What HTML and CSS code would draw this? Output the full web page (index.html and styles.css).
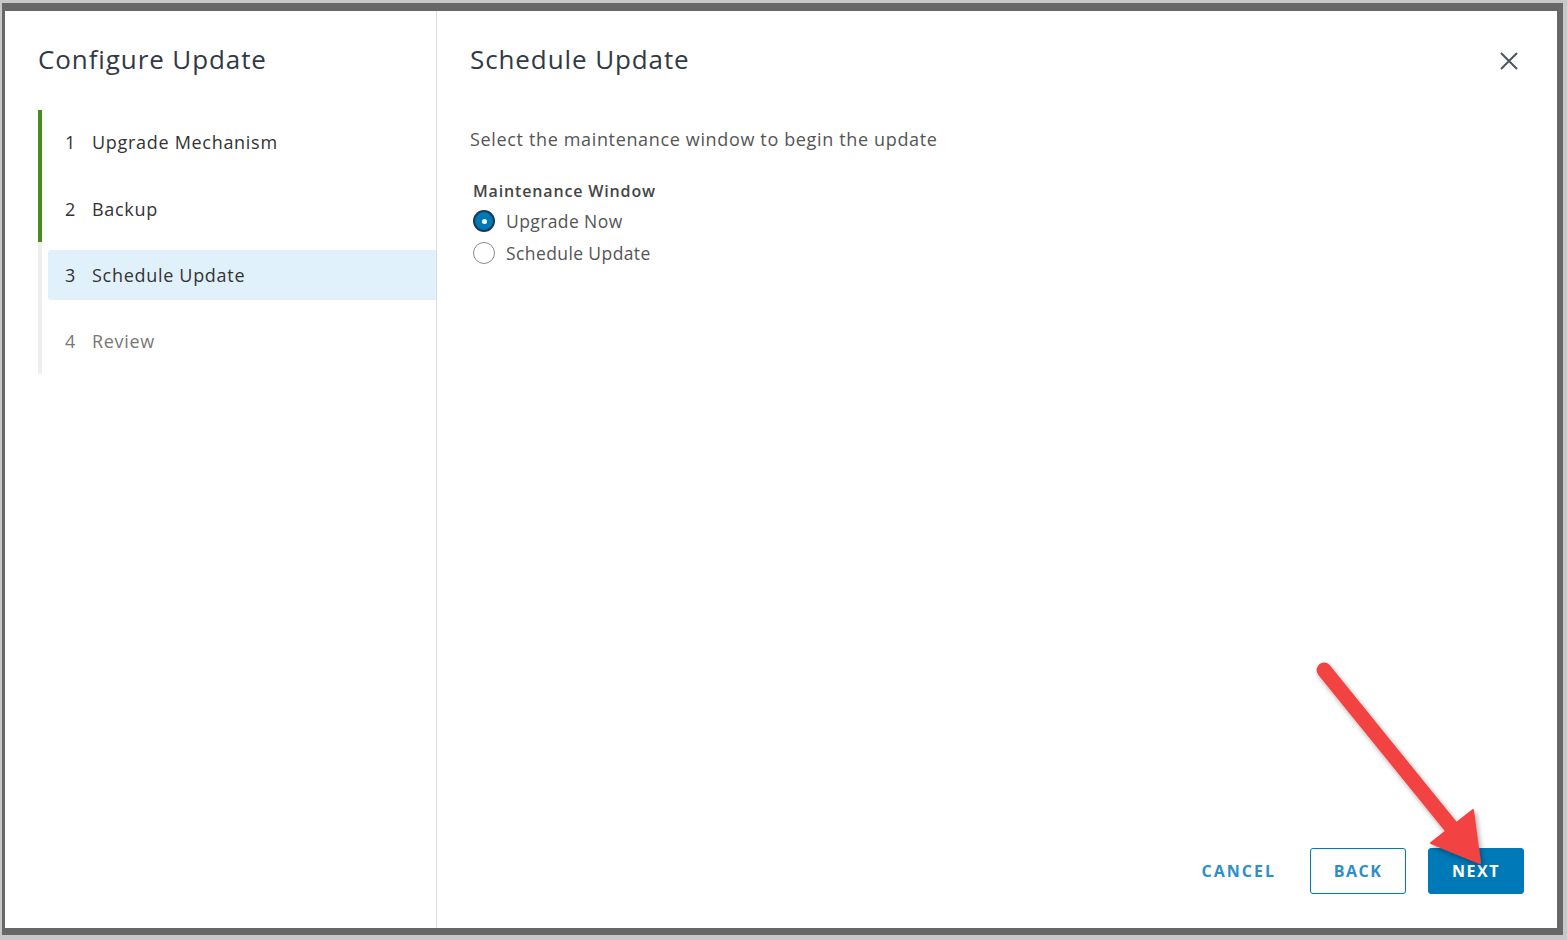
FILE: index.html
```html
<!DOCTYPE html>
<html>
<head>
<meta charset="utf-8">
<link rel="stylesheet" href="styles.css">
</head>
<body>
<div class="screen">
  <div class="dialog">
    <aside class="side">
      <h1 class="side-title">Configure Update</h1>
      <ol class="steps">
        <li class="step done"><div class="step-inner"><span class="num">1</span><span>Upgrade Mechanism</span></div></li>
        <li class="step done"><div class="step-inner"><span class="num">2</span><span>Backup</span></div></li>
        <li class="step current"><div class="step-inner"><span class="num">3</span><span>Schedule Update</span></div></li>
        <li class="step todo"><div class="step-inner"><span class="num">4</span><span>Review</span></div></li>
      </ol>
    </aside>
    <main class="content">
      <header class="content-head">
        <h2 class="content-title">Schedule Update</h2>
        <button class="close" aria-label="Close">
          <svg width="20" height="20" viewBox="0 0 20 20"><path d="M2 2L18 18M18 2L2 18" stroke="#4a5560" stroke-width="2" fill="none"/></svg>
        </button>
      </header>
      <p class="lead">Select the maintenance window to begin the update</p>
      <div class="field">
        <div class="field-label">Maintenance Window</div>
        <label class="radio"><span class="dot checked"></span>Upgrade Now</label>
        <label class="radio"><span class="dot"></span>Schedule Update</label>
      </div>
      <footer class="actions">
        <button class="btn link">CANCEL</button>
        <button class="btn outline">BACK</button>
        <button class="btn primary">NEXT</button>
      </footer>
    </main>
  </div>
</div>
<svg class="arrow" width="1567" height="940" viewBox="0 0 1567 940">
  <defs>
    <filter id="sh" x="-20%" y="-20%" width="140%" height="140%">
      <feDropShadow dx="2" dy="3" stdDeviation="2.5" flood-color="#000" flood-opacity="0.35"/>
    </filter>
  </defs>
  <g filter="url(#sh)" fill="#f24343" stroke="#f24343">
    <line x1="1324" y1="670" x2="1452" y2="828" stroke-width="15" stroke-linecap="round"/>
    <polygon points="1431,843 1473,810 1480,863" stroke-width="2" stroke-linejoin="round"/>
  </g>
</svg>
</body>
</html>
```
FILE: styles.css
```css
* { box-sizing: border-box; }
html, body { margin: 0; padding: 0; }
body {
  width: 1567px;
  height: 940px;
  background: #c8c8c8;
  font-family: "Open Sans", "Noto Sans", sans-serif;
  color: #333;
  overflow: hidden;
  position: relative;
}
.screen {
  margin: 3px 4px 5px 2px;
  height: 932px;
  background: #676767;
  padding: 8px 6px 7px 3px;
}
.dialog {
  height: 917px;
  background: #fff;
  display: flex;
}
.side {
  width: 432px;
  flex: none;
  border-right: 1px solid #dcdcdc;
  padding: 28px 0 0 33px;
}
.side-title, .content-title {
  margin: 0;
  font-weight: 400;
  font-size: 26px;
  letter-spacing: 0.9px;
  line-height: 40px;
  color: #313a44;
}
.steps {
  list-style: none;
  margin: 31px 0 0;
  padding: 0;
}
.step {
  height: 66px;
  display: flex;
  border-left: 4px solid #eeeeee;
}
.step.done { border-left-color: #4a8a1b; }
.step-inner {
  flex: 1;
  margin: 8px 0 8px 6px;
  border-radius: 3px 0 0 3px;
  display: flex;
  align-items: center;
  padding-left: 17px;
  font-size: 18px;
  letter-spacing: 0.7px;
  color: #333;
}
.step:nth-child(1) .step-inner { padding-bottom: 3px; }
.step:nth-child(2) .step-inner { padding-bottom: 1px; }
.step.current .step-inner { background: #e1f1fb; }
.step.todo .step-inner { color: #777; }
.num { width: 27px; flex: none; letter-spacing: 0; }

.content {
  flex: 1;
  display: flex;
  flex-direction: column;
  padding: 28px 33px 34px 33px;
}
.content-head {
  display: flex;
  align-items: center;
  justify-content: space-between;
}
.close {
  background: none;
  border: 0;
  padding: 0;
  margin: 3px 5px 0 0;
  width: 20px;
  height: 20px;
  display: flex;
}
.lead {
  margin: 47px 0 0;
  font-size: 18px;
  letter-spacing: 0.65px;
  line-height: 26px;
  color: #555;
}
.field { margin-top: 28px; padding-left: 3px; }
.field-label {
  font-size: 16px;
  font-weight: 600;
  letter-spacing: 0.85px;
  line-height: 22px;
  color: #454545;
  margin-bottom: 3px;
}
.radio {
  display: flex;
  align-items: center;
  height: 32px;
  font-size: 17.5px;
  letter-spacing: 0.4px;
  color: #555;
}
.dot {
  width: 22px;
  height: 22px;
  border-radius: 50%;
  border: 1px solid #8c8c8c;
  margin-right: 11px;
  flex: none;
  position: relative;
}
.dot.checked {
  background: #0079b8;
  border: 2px solid #1a3a52;
}
.dot.checked::after {
  content: "";
  position: absolute;
  left: 50%; top: 50%;
  width: 5px; height: 5px;
  margin: -2.5px 0 0 -2.5px;
  border-radius: 50%;
  background: #fff;
}
.actions {
  margin-top: auto;
  display: flex;
  justify-content: flex-end;
  align-items: center;
  gap: 22px;
}
.btn {
  height: 46px;
  min-width: 96px;
  border-radius: 3px;
  font-family: "Open Sans", sans-serif;
  font-weight: 700;
  font-size: 16px;
  letter-spacing: 1.5px;
  cursor: pointer;
}
.btn.link {
  background: none;
  border: 0;
  color: #2c8fc9;
  min-width: 0;
  padding: 0 12px;
  letter-spacing: 2px;
}
.btn.outline {
  background: #fff;
  border: 1px solid #0079b8;
  color: #2c8fc9;
}
.btn.primary {
  background: #0079b8;
  border: 1px solid #0079b8;
  color: #fff;
}
.arrow {
  position: absolute;
  left: 0; top: 0;
  pointer-events: none;
}
```
